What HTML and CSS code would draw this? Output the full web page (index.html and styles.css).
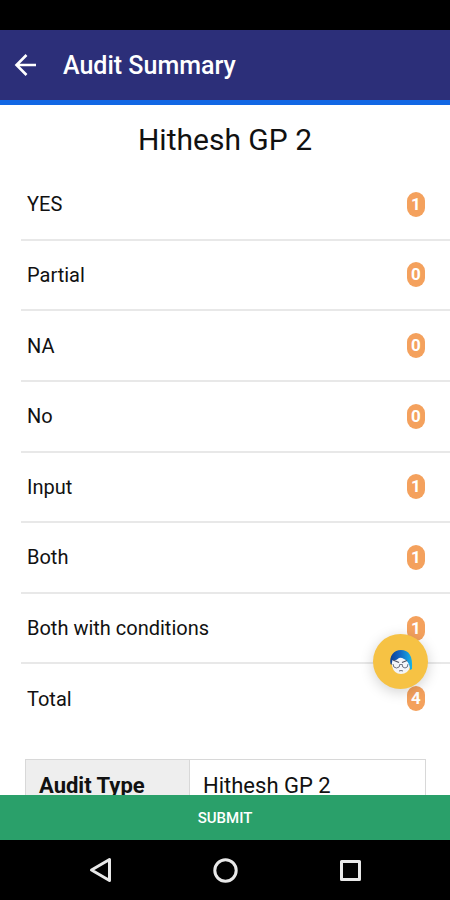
FILE: index.html
```html
<!DOCTYPE html>
<html lang="en">
<head>
<meta charset="utf-8">
<meta name="viewport" content="width=device-width, initial-scale=1">
<title>Audit Summary</title>
<link rel="stylesheet" href="styles.css">
</head>
<body>
<div class="status-bar"></div>
<header class="app-bar">
  <button class="icon-button" type="button" aria-label="Back">
    <svg width="24" height="24" viewBox="0 0 24 24" fill="none" stroke="currentColor" stroke-width="2.6"><path d="M12.5 2 2.5 12l10 10M2.5 12H22"/></svg>
  </button>
  <h1 class="app-title">Audit Summary</h1>
</header>
<main class="content">
  <h2 class="page-title">Hithesh GP 2</h2>
  <ul class="counts">
    <li class="count"><span>YES</span><span class="badge">1</span></li>
    <li class="count"><span>Partial</span><span class="badge">0</span></li>
    <li class="count"><span>NA</span><span class="badge">0</span></li>
    <li class="count"><span>No</span><span class="badge">0</span></li>
    <li class="count"><span>Input</span><span class="badge">1</span></li>
    <li class="count"><span>Both</span><span class="badge">1</span></li>
    <li class="count"><span>Both with conditions</span><span class="badge">1</span></li>
    <li class="count"><span>Total</span><span class="badge">4</span></li>
  </ul>
  <table class="details">
    <tbody><tr><th scope="row">Audit Type</th><td>Hithesh GP 2</td></tr></tbody>
  </table>
</main>
<footer class="bottom">
  <button class="assistant" type="button" aria-label="Assistant">
    <svg width="24" height="26" viewBox="0 0 24 26">
      <defs><linearGradient id="hair" x1="0" x2="1"><stop offset="0" stop-color="#0b3f96"/><stop offset=".45" stop-color="#1267c4"/><stop offset="1" stop-color="#18b4e8"/></linearGradient></defs>
      <path d="M3 11Q12 4 20 10L21 18Q19 25 12 25Q5 25 3 17Z" fill="#f3f5f9"/>
      <path d="M1.500 15C0 7 5 1 12 1C20 1 24 7 23 20L21 21C21 16 19 12 15 10Q12 8 10 9Q7 12 3.500 11L2.500 16Z" fill="url(#hair)"/>
      <path d="M4 11L10 13.500M13 13.500L18 11.500" fill="none" stroke="#4d5263" stroke-width="1.300"/>
      <path d="M4 15Q4 19 7.500 19Q11 19 11 15M13 15Q13 19 16 19Q19 19 19 15M11 15.500H13M10 22Q12 21 14 22" fill="none" stroke="#6d7282" stroke-width="1"/>
    </svg>
  </button>
  <button class="submit" type="button">SUBMIT</button>
  <nav class="system-nav" aria-label="System">
    <button class="icon-button" type="button" aria-label="System back">
      <svg width="26" height="26" viewBox="0 0 26 26"><path d="M22.500 2.500V23.500L4.500 13Z"/></svg>
    </button>
    <button class="icon-button" type="button" aria-label="Home">
      <svg width="26" height="26" viewBox="0 0 26 26"><circle cx="13.500" cy="13.500" r="10.700"/></svg>
    </button>
    <button class="icon-button" type="button" aria-label="Recent apps">
      <svg width="26" height="26" viewBox="0 0 26 26"><path d="M4.500 4.500H22.500V22.500H4.500Z"/></svg>
    </button>
  </nav>
</footer>
</body>
</html>
```
FILE: styles.css
```css
* {
  box-sizing: border-box;
}

body {
  margin: 0;
  height: 100vh;
  display: flex;
  flex-direction: column;
  background: #fff;
  color: #111;
  font-family: Roboto, "Liberation Sans", sans-serif;
  font-size: 20px;
}

button {
  border: 0;
  padding: 0;
  font: inherit;
  color: #fff;
  cursor: pointer;
}

svg {
  display: block;
}

.icon-button {
  background: none;
}

.status-bar {
  flex: none;
  height: 30px;
  background: #000;
}

.app-bar {
  flex: none;
  display: flex;
  align-items: center;
  gap: 25px;
  height: 75px;
  padding: 0 14px;
  background: #2c2f79;
  border-bottom: 5px solid #1267e4;
  color: #fff;
}

.app-title {
  margin: 0;
  font-size: 25px;
  font-weight: 500;
}

.content {
  flex: 1;
  min-height: 0;
  overflow-y: auto;
  scrollbar-width: none;
}

.page-title {
  margin: 0;
  padding-top: 17px;
  font-size: 30px;
  font-weight: 400;
  line-height: 36px;
  text-align: center;
}

.counts {
  display: flex;
  flex-direction: column;
  min-height: 565px;
  margin: 12px 0 24px 21px;
  padding: 0;
  list-style: none;
}

.count {
  flex: 1;
  display: flex;
  align-items: center;
  justify-content: space-between;
  padding: 0 25px 0 6px;
  border-bottom: 2px solid #e8e8e8;
}

.count:last-child {
  border-bottom-color: transparent;
}

.badge {
  width: 18px;
  border-radius: 9px;
  background: #f4a15d;
  color: #fff;
  font-size: 17px;
  font-weight: 700;
  line-height: 25px;
  text-align: center;
}

.details {
  width: calc(100% - 49px);
  margin: 0 24px 24px 25px;
  border-collapse: collapse;
  table-layout: fixed;
  font-size: 22px;
  line-height: 26px;
  text-align: left;
}

.details th,
.details td {
  padding: 13px;
  border: 1px solid #d8d8d8;
}

.details th {
  width: 41%;
  background: #eee;
  font-weight: 700;
}

.bottom {
  position: relative;
  flex: none;
}

.submit {
  display: block;
  width: 100%;
  height: 45px;
  background: #2aa06a;
  font-size: 15px;
  font-weight: 500;
}

.assistant {
  position: absolute;
  right: 22px;
  bottom: 211px;
  display: grid;
  place-items: center;
  width: 55px;
  height: 55px;
  border-radius: 50%;
  background: #f6c244;
  box-shadow: 0 3px 14px rgb(0 0 0 / 18%);
}

.system-nav {
  display: flex;
  align-items: center;
  justify-content: space-between;
  height: 60px;
  padding: 0 87px;
  background: #000;
}

.system-nav svg {
  fill: none;
  stroke: #e8e8e8;
  stroke-width: 3;
  stroke-linejoin: round;
}
```
